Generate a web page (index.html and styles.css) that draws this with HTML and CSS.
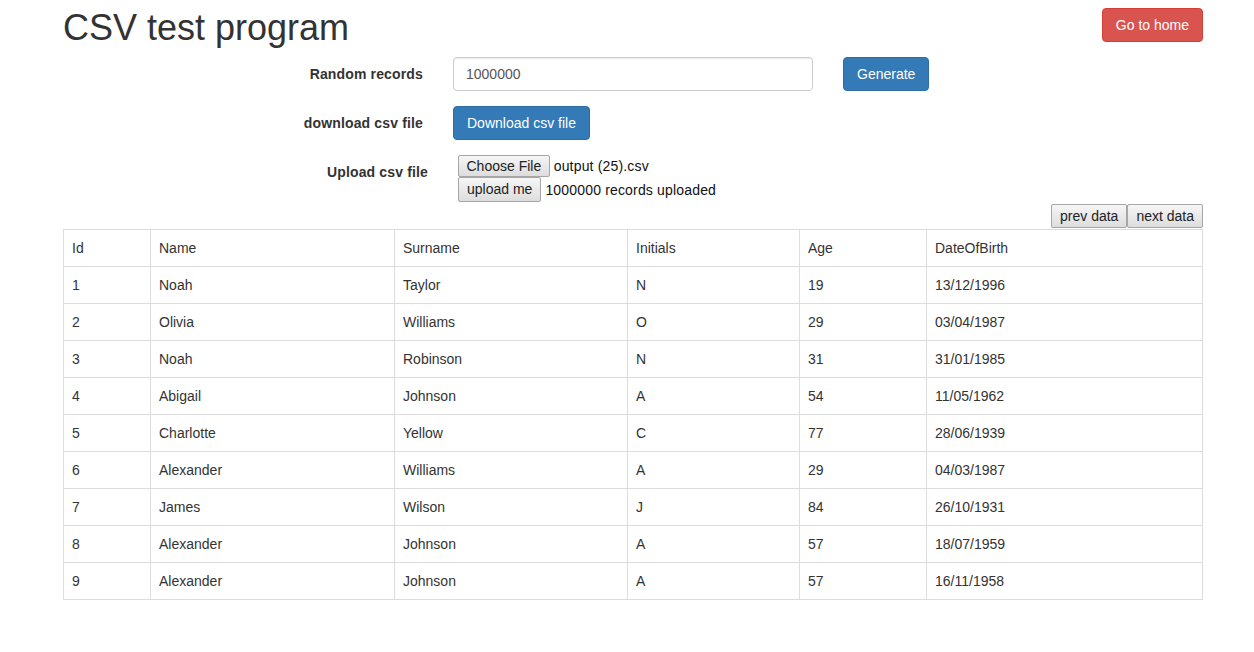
FILE: index.html
```html
<!DOCTYPE html>
<html lang="en">
<head>
<meta charset="utf-8">
<title>CSV test program</title>
<link rel="stylesheet" href="styles.css">
</head>
<body>
<div class="page">
  <div class="header">
    <h1 class="title">CSV test program</h1>
    <button class="btn btn-danger" type="button">Go to home</button>
  </div>

  <div class="form">
    <div class="form-row">
      <label class="control-label">Random records</label>
      <div class="field field-inline">
        <input class="form-control" type="text" value="1000000">
        <button class="btn btn-primary btn-gap" type="button">Generate</button>
      </div>
    </div>
    <div class="form-row">
      <label class="control-label">download csv file</label>
      <div class="field">
        <button class="btn btn-primary" type="button">Download csv file</button>
      </div>
    </div>
    <div class="form-row upload-row">
      <label class="control-label">Upload csv file</label>
      <div class="field field-stack">
        <div class="file-line">
          <button class="native-btn file-btn" type="button">Choose File</button><span class="file-text">output (25).csv</span>
        </div>
        <div class="file-line">
          <button class="native-btn upload-btn" type="button">upload me</button><span class="file-text">1000000 records uploaded</span>
        </div>
      </div>
    </div>
  </div>

  <div class="pager">
    <button class="native-btn pager-btn" type="button">prev data</button><button class="native-btn pager-btn" type="button">next data</button>
  </div>

  <table class="data-table">
    <colgroup>
      <col class="c-id"><col class="c-name"><col class="c-surname"><col class="c-initials"><col class="c-age"><col class="c-dob">
    </colgroup>
    <thead>
      <tr><th>Id</th><th>Name</th><th>Surname</th><th>Initials</th><th>Age</th><th>DateOfBirth</th></tr>
    </thead>
    <tbody>
      <tr><td>1</td><td>Noah</td><td>Taylor</td><td>N</td><td>19</td><td>13/12/1996</td></tr>
      <tr><td>2</td><td>Olivia</td><td>Williams</td><td>O</td><td>29</td><td>03/04/1987</td></tr>
      <tr><td>3</td><td>Noah</td><td>Robinson</td><td>N</td><td>31</td><td>31/01/1985</td></tr>
      <tr><td>4</td><td>Abigail</td><td>Johnson</td><td>A</td><td>54</td><td>11/05/1962</td></tr>
      <tr><td>5</td><td>Charlotte</td><td>Yellow</td><td>C</td><td>77</td><td>28/06/1939</td></tr>
      <tr><td>6</td><td>Alexander</td><td>Williams</td><td>A</td><td>29</td><td>04/03/1987</td></tr>
      <tr><td>7</td><td>James</td><td>Wilson</td><td>J</td><td>84</td><td>26/10/1931</td></tr>
      <tr><td>8</td><td>Alexander</td><td>Johnson</td><td>A</td><td>57</td><td>18/07/1959</td></tr>
      <tr><td>9</td><td>Alexander</td><td>Johnson</td><td>A</td><td>57</td><td>16/11/1958</td></tr>
    </tbody>
  </table>
</div>
</body>
</html>
```

FILE: styles.css
```css
* { box-sizing: border-box; }

html, body {
  margin: 0;
  padding: 0;
  background: #fff;
}

body {
  font-family: "Liberation Sans", Arial, Helvetica, sans-serif;
  font-size: 14px;
  line-height: 20px;
  color: #333;
}

.page {
  width: 1140px;
  margin-left: 63px;
}

.header {
  display: flex;
  justify-content: space-between;
  align-items: flex-start;
  padding-top: 8px;
}

.title {
  margin: 0;
  font-size: 36px;
  line-height: 40px;
  font-weight: normal;
  color: #333;
}

.btn {
  display: inline-block;
  height: 34px;
  padding: 6px 13px;
  font-family: inherit;
  font-size: 14px;
  line-height: 20px;
  border: 1px solid transparent;
  border-radius: 4px;
  color: #fff;
  cursor: pointer;
  white-space: nowrap;
}

.btn-danger {
  background: #d9534f;
  border-color: #d43f3a;
}

.btn-primary {
  background: #337ab7;
  border-color: #2e6da4;
}

.form {
  margin-top: 9px;
}

.form-row {
  display: flex;
  align-items: flex-start;
  margin-bottom: 15px;
}

.control-label {
  width: 360px;
  flex: none;
  padding-top: 7px;
  text-align: right;
  font-weight: bold;
  letter-spacing: 0.15px;
  margin-right: 30px;
}

.upload-row {
  margin-bottom: 0;
}

.upload-row .control-label {
  width: 365px;
}

.field-inline {
  display: flex;
  align-items: flex-start;
}

.form-control {
  width: 360px;
  height: 34px;
  padding: 6px 12px;
  font-family: inherit;
  font-size: 14px;
  line-height: 20px;
  color: #555;
  background: #fff;
  border: 1px solid #ccc;
  border-radius: 4px;
  box-shadow: inset 0 1px 1px rgba(0, 0, 0, .075);
  outline: none;
}

.btn-gap {
  margin-left: 30px;
}

.field-stack {
  display: flex;
  flex-direction: column;
  align-items: flex-start;
}

.file-line {
  display: flex;
  align-items: center;
}

.native-btn {
  font-family: inherit;
  font-size: 14px;
  color: #222;
  background: linear-gradient(#f6f6f6, #dddddd);
  border: 1px solid #a6a6a6;
  border-radius: 2px;
  cursor: pointer;
  white-space: nowrap;
}

.file-btn {
  height: 22px;
  padding: 0 7.5px;
  line-height: 20px;
}

.upload-btn {
  height: 25px;
  padding: 1px 8px;
  line-height: 21px;
}

.file-text {
  margin-left: 4px;
  color: #111;
  letter-spacing: 0.17px;
}

.pager {
  display: flex;
  justify-content: flex-end;
  margin-top: 2px;
}

.pager-btn {
  height: 24px;
  padding: 1px 8px;
  line-height: 20px;
}

.data-table {
  width: 1140px;
  margin-top: 1px;
  border-collapse: collapse;
  table-layout: fixed;
  border: 1px solid #ddd;
}

.c-id { width: 87px; }
.c-name { width: 244px; }
.c-surname { width: 233px; }
.c-initials { width: 172px; }
.c-age { width: 127px; }

.data-table th,
.data-table td {
  padding: 8px;
  line-height: 20px;
  text-align: left;
  font-weight: normal;
  border: 1px solid #ddd;
  vertical-align: top;
}
```
